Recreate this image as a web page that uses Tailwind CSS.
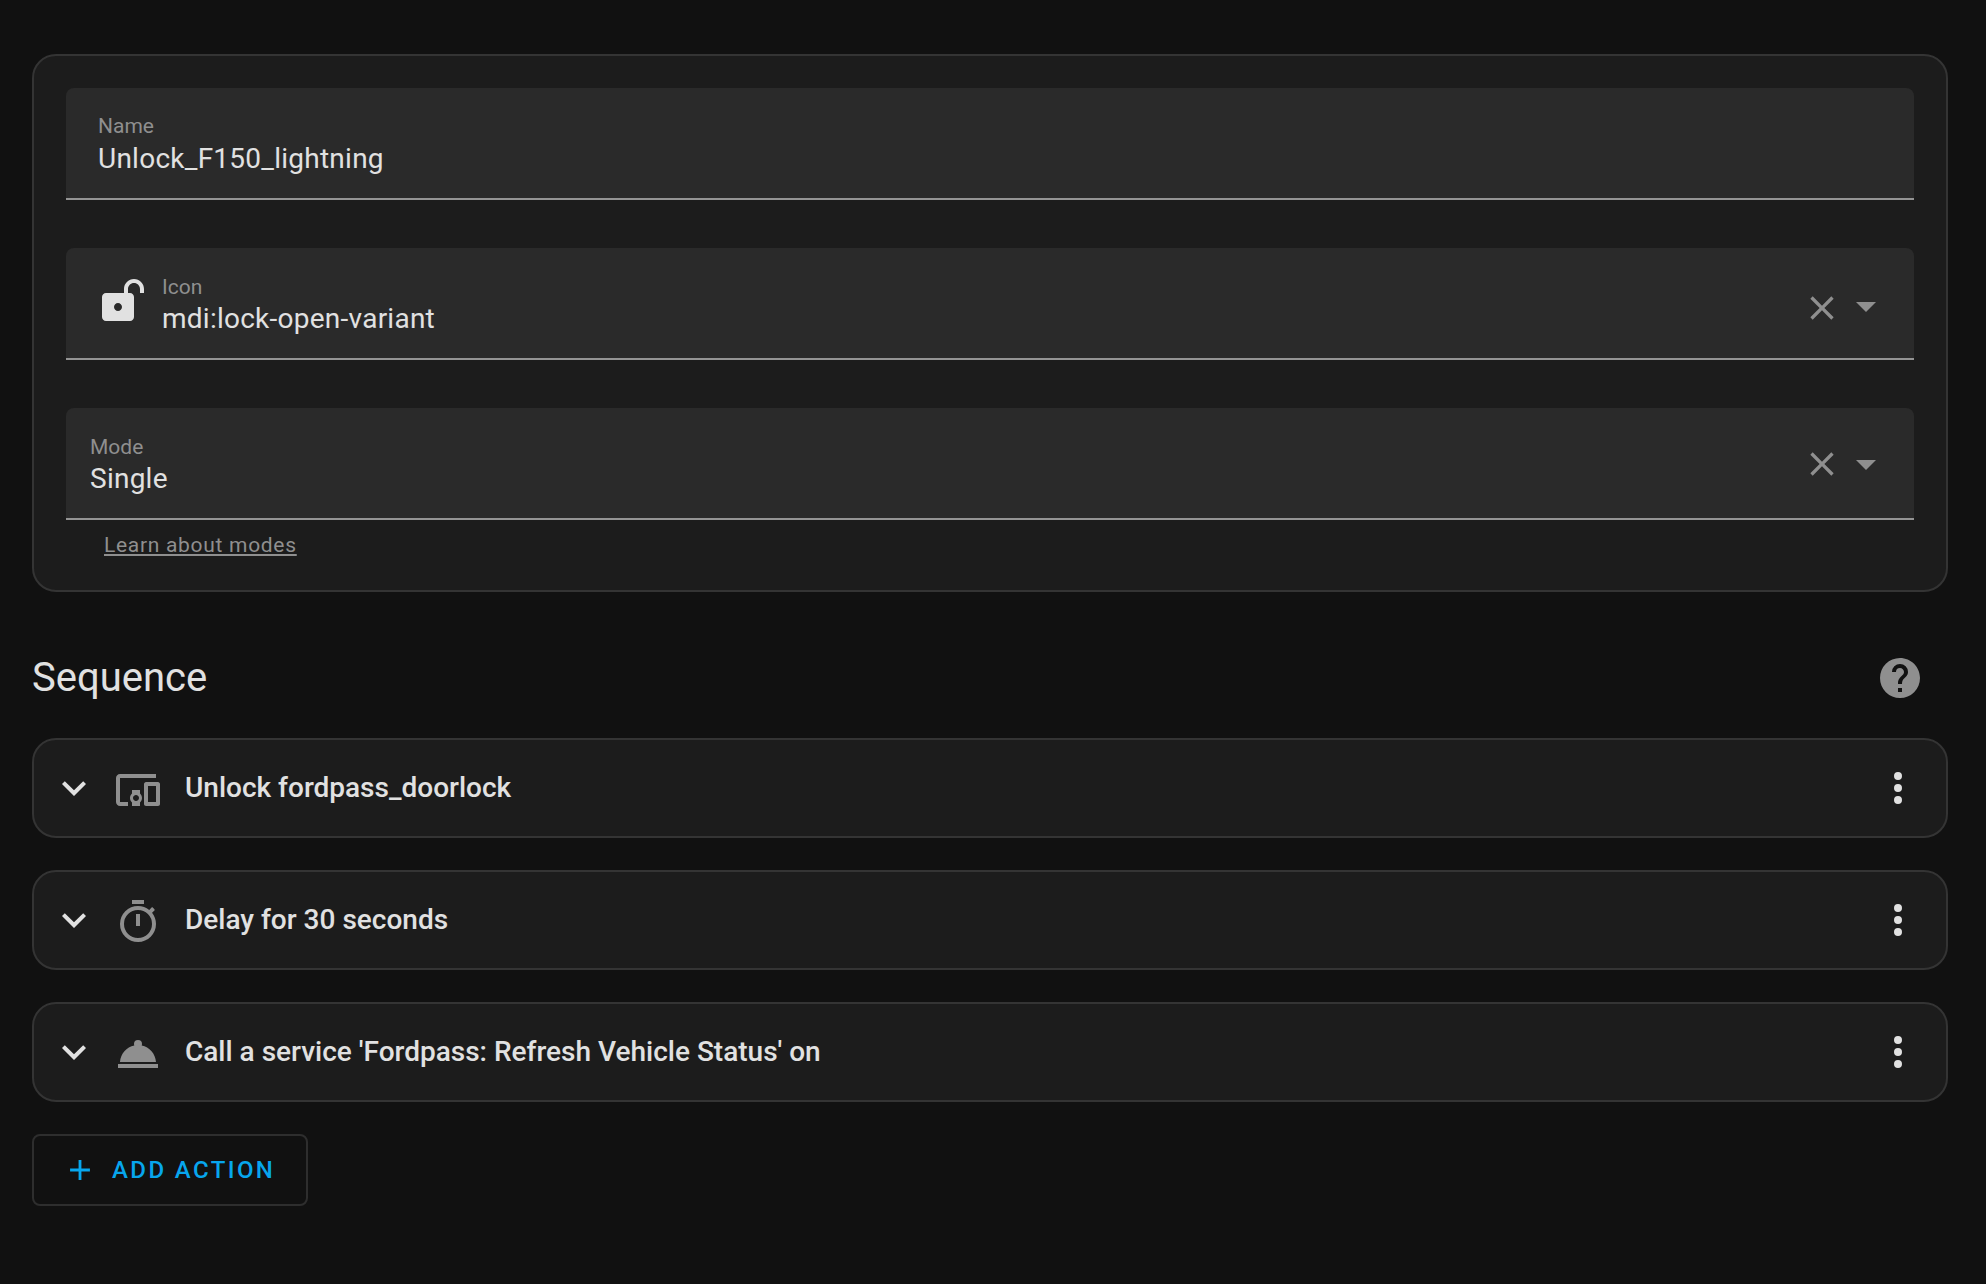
<!DOCTYPE html>
<html lang="en">
<head>
  <meta charset="UTF-8" />
  <title>Unlock F150 script</title>
  <script src="https://cdn.jsdelivr.net/npm/@tailwindcss/browser@4"></script>
</head>
<body class="bg-[#111111] min-h-screen font-['Roboto',sans-serif] text-[#e1e1e1]">
  <main class="w-[1986px] h-[1284px] pl-[32px] pr-[38px] pt-[54px]">

    <!-- Settings card -->
    <section class="h-[538px] bg-[#1c1c1c] border-2 border-[#343434] rounded-[24px] px-[32px] pt-[32px]">
      <!-- Name -->
      <div class="h-[112px] bg-[#2a2a2a] rounded-t-[8px] border-b-2 border-[#949494] pl-[32px] pt-[26px]">
        <div class="text-[21px] leading-[24px] text-[#8f8f8f]">Name</div>
        <div class="text-[28px] leading-[32px] tracking-[0.25px] mt-[5px]">Unlock_F150_lightning</div>
      </div>

      <!-- Icon -->
      <div class="h-[112px] mt-[48px] bg-[#2a2a2a] rounded-t-[8px] border-b-2 border-[#949494] flex items-center pl-[32px] pr-[24px]">
        <svg class="w-[48px] h-[48px] fill-[#e1e1e1] shrink-0 mb-[4px]" viewBox="0 0 24 24"><path d="M18 1C15.24 1 13 3.24 13 6V8H4C2.9 8 2 8.89 2 10V20C2 21.11 2.9 22 4 22H16C17.11 22 18 21.11 18 20V10C18 8.9 17.11 8 16 8H15V6C15 4.34 16.34 3 18 3C19.66 3 21 4.34 21 6V8H23V6C23 3.24 20.76 1 18 1M10 13C11.1 13 12 13.9 12 15C12 16.11 11.11 17 10 17C8.9 17 8 16.11 8 15C8 13.9 8.9 13 10 13Z"/></svg>
        <div class="ml-[16px] flex-1 mt-[3px]">
          <div class="text-[21px] leading-[24px] text-[#8f8f8f]">Icon</div>
          <div class="text-[28px] leading-[32px] tracking-[0.25px] mt-[4px]">mdi:lock-open-variant</div>
        </div>
        <svg class="w-[40px] h-[40px] fill-[#8f8f8f] mt-[10px]" viewBox="0 0 24 24"><path d="M19,6.41L17.59,5L12,10.59L6.41,5L5,6.41L10.59,12L5,17.59L6.41,19L12,13.41L17.59,19L19,17.59L13.41,12L19,6.41Z"/></svg>
        <svg class="w-[48px] h-[48px] fill-[#8f8f8f] mt-[6px]" viewBox="0 0 24 24"><path d="M7,10L12,15L17,10H7Z"/></svg>
      </div>

      <!-- Mode -->
      <div class="h-[112px] mt-[48px] bg-[#2a2a2a] rounded-t-[8px] border-b-2 border-[#949494] flex items-center pl-[24px] pr-[24px]">
        <div class="flex-1 mt-[3px]">
          <div class="text-[21px] leading-[24px] text-[#8f8f8f]">Mode</div>
          <div class="text-[28px] leading-[32px] tracking-[0.25px] mt-[4px]">Single</div>
        </div>
        <svg class="w-[40px] h-[40px] fill-[#8f8f8f] mt-[2px]" viewBox="0 0 24 24"><path d="M19,6.41L17.59,5L12,10.59L6.41,5L5,6.41L10.59,12L5,17.59L6.41,19L12,13.41L17.59,19L19,17.59L13.41,12L19,6.41Z"/></svg>
        <svg class="w-[48px] h-[48px] fill-[#8f8f8f] mt-[2px]" viewBox="0 0 24 24"><path d="M7,10L12,15L17,10H7Z"/></svg>
      </div>
      <a href="#" class="block ml-[38px] mt-[13px] text-[21px] leading-[24px] tracking-[0.7px] text-[#8f8f8f] underline">Learn about modes</a>
    </section>

    <!-- Sequence header -->
    <div class="h-[146px] pt-[26px] flex items-center justify-between pr-[24px]">
      <h2 class="text-[40px] leading-[48px] font-normal">Sequence</h2>
      <svg class="w-[48px] h-[48px] fill-[#8f8f8f]" viewBox="0 0 24 24"><path d="M15.07,11.25L14.17,12.17C13.45,12.89 13,13.5 13,15H11V14.5C11,13.39 11.45,12.39 12.17,11.67L13.41,10.41C13.78,10.05 14,9.55 14,9C14,7.89 13.1,7 12,7A2,2 0 0,0 10,9H8A4,4 0 0,1 12,5A4,4 0 0,1 16,9C16,9.88 15.64,10.67 15.07,11.25M13,19H11V17H13M12,2A10,10 0 0,0 2,12A10,10 0 0,0 12,22A10,10 0 0,0 22,12C22,6.47 17.5,2 12,2Z"/></svg>
    </div>

    <!-- Actions -->
    <div class="flex flex-col gap-[32px]">
      <div class="h-[100px] bg-[#1c1c1c] border-2 border-[#343434] rounded-[24px] flex items-center pl-[16px] pr-[24px]">
        <svg class="w-[48px] h-[48px] fill-[#e1e1e1] shrink-0" viewBox="0 0 24 24"><path d="M7.41,8.58L12,13.17L16.59,8.58L18,10L12,16L6,10L7.41,8.58Z"/></svg>
        <svg class="w-[48px] h-[48px] fill-[#8f8f8f] shrink-0 ml-[16px] mt-[4px]" viewBox="0 0 24 24"><path d="M3 6H21V4H3C1.9 4 1 4.9 1 6V18C1 19.1 1.9 20 3 20H7V18H3V6M13 12H9V13.78C8.39 14.33 8 15.11 8 16C8 16.89 8.39 17.67 9 18.22V20H13V18.22C13.61 17.67 14 16.88 14 16S13.61 14.33 13 13.78V12M11 17.5C10.17 17.5 9.5 16.83 9.5 16S10.17 14.5 11 14.5 12.5 15.17 12.5 16 11.83 17.5 11 17.5M22 8H16C15.5 8 15 8.5 15 9V19C15 19.5 15.5 20 16 20H22C22.5 20 23 19.5 23 19V9C23 8.5 22.5 8 22 8M21 18H17V10H21V18Z"/></svg>
        <div class="flex-1 ml-[23px] text-[28px] leading-[32px] font-medium">Unlock fordpass_doorlock</div>
        <svg class="w-[48px] h-[48px] fill-[#e1e1e1] shrink-0" viewBox="0 0 24 24"><path d="M12,16A2,2 0 0,1 14,18A2,2 0 0,1 12,20A2,2 0 0,1 10,18A2,2 0 0,1 12,16M12,10A2,2 0 0,1 14,12A2,2 0 0,1 12,14A2,2 0 0,1 10,12A2,2 0 0,1 12,10M12,4A2,2 0 0,1 14,6A2,2 0 0,1 12,8A2,2 0 0,1 10,6A2,2 0 0,1 12,4Z"/></svg>
      </div>
      <div class="h-[100px] bg-[#1c1c1c] border-2 border-[#343434] rounded-[24px] flex items-center pl-[16px] pr-[24px]">
        <svg class="w-[48px] h-[48px] fill-[#e1e1e1] shrink-0" viewBox="0 0 24 24"><path d="M7.41,8.58L12,13.17L16.59,8.58L18,10L12,16L6,10L7.41,8.58Z"/></svg>
        <svg class="w-[48px] h-[48px] fill-[#8f8f8f] shrink-0 ml-[16px] mt-[4px]" viewBox="0 0 24 24"><path d="M12,20A7,7 0 0,1 5,13A7,7 0 0,1 12,6A7,7 0 0,1 19,13A7,7 0 0,1 12,20M19.03,7.39L20.45,5.97C20,5.46 19.55,5 19.04,4.56L17.62,6C16.07,4.74 14.12,4 12,4A9,9 0 0,0 3,13A9,9 0 0,0 12,22C17,22 21,17.97 21,13C21,10.88 20.26,8.93 19.03,7.39M11,14H13V8H11M15,1H9V3H15V1Z"/></svg>
        <div class="flex-1 ml-[23px] text-[28px] leading-[32px] font-medium">Delay for 30 seconds</div>
        <svg class="w-[48px] h-[48px] fill-[#e1e1e1] shrink-0" viewBox="0 0 24 24"><path d="M12,16A2,2 0 0,1 14,18A2,2 0 0,1 12,20A2,2 0 0,1 10,18A2,2 0 0,1 12,16M12,10A2,2 0 0,1 14,12A2,2 0 0,1 12,14A2,2 0 0,1 10,12A2,2 0 0,1 12,10M12,4A2,2 0 0,1 14,6A2,2 0 0,1 12,8A2,2 0 0,1 10,6A2,2 0 0,1 12,4Z"/></svg>
      </div>
      <div class="h-[100px] bg-[#1c1c1c] border-2 border-[#343434] rounded-[24px] flex items-center pl-[16px] pr-[24px]">
        <svg class="w-[48px] h-[48px] fill-[#e1e1e1] shrink-0" viewBox="0 0 24 24"><path d="M7.41,8.58L12,13.17L16.59,8.58L18,10L12,16L6,10L7.41,8.58Z"/></svg>
        <svg class="w-[48px] h-[48px] fill-[#8f8f8f] shrink-0 ml-[16px] mt-[4px]" viewBox="0 0 24 24"><path d="M2,17H22V19H2V17M13.84,7.79C13.94,7.55 14,7.28 14,7A2,2 0 0,0 12,5A2,2 0 0,0 10,7C10,7.28 10.06,7.55 10.16,7.79C6.25,8.6 3.27,11.93 3,16H21C20.73,11.93 17.75,8.6 13.84,7.79Z"/></svg>
        <div class="flex-1 ml-[23px] text-[28px] leading-[32px] font-medium">Call a service 'Fordpass: Refresh Vehicle Status' on</div>
        <svg class="w-[48px] h-[48px] fill-[#e1e1e1] shrink-0" viewBox="0 0 24 24"><path d="M12,16A2,2 0 0,1 14,18A2,2 0 0,1 12,20A2,2 0 0,1 10,18A2,2 0 0,1 12,16M12,10A2,2 0 0,1 14,12A2,2 0 0,1 12,14A2,2 0 0,1 10,12A2,2 0 0,1 12,10M12,4A2,2 0 0,1 14,6A2,2 0 0,1 12,8A2,2 0 0,1 10,6A2,2 0 0,1 12,4Z"/></svg>
      </div>
    </div>

    <!-- Add action -->
    <button class="mt-[32px] w-[276px] h-[72px] border-2 border-[#2e2e2e] rounded-[8px] flex items-center pl-[29px] text-[#07a6ed]">
      <svg class="w-[34px] h-[34px] fill-current shrink-0" viewBox="0 0 24 24"><path d="M19,13H13V19H11V13H5V11H11V5H13V11H19V13Z"/></svg>
      <span class="ml-[15px] text-[24px] leading-[28px] font-medium tracking-[2.4px]">ADD ACTION</span>
    </button>
  </main>
</body>
</html>
